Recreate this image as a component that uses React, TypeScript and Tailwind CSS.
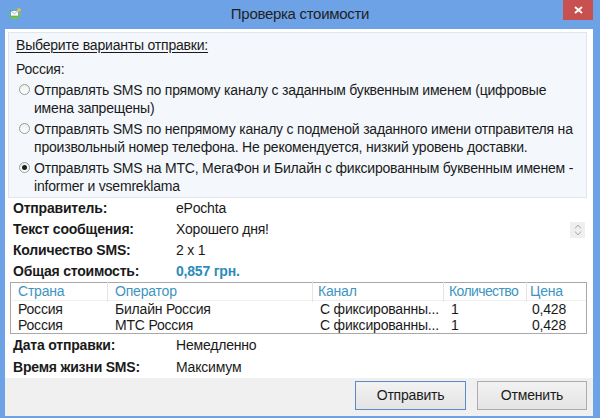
import React from 'react';

const font = "font-['Liberation_Sans',Arial,sans-serif]";

const options = [
  {
    lines: ['Отправлять SMS по прямому каналу с заданным буквенным именем (цифровые', 'имена запрещены)'],
    checked: false,
  },
  {
    lines: [
      'Отправлять SMS по непрямому каналу с подменой заданного имени отправителя на',
      'произвольный номер телефона. Не рекомендуется, низкий уровень доставки.',
    ],
    checked: false,
  },
  {
    lines: ['Отправлять SMS на МТС, МегаФон и Билайн с фиксированным буквенным именем -', 'informer и vsemreklama'],
    checked: true,
  },
];

const rows = [
  { country: 'Россия', operator: 'Билайн Россия', channel: 'С фиксированны...', count: '1', price: '0,428' },
  { country: 'Россия', operator: 'МТС Россия', channel: 'С фиксированны...', count: '1', price: '0,428' },
];

const AppIcon = () => (
  <svg width="15" height="14" viewBox="0 0 15 14">
    <circle cx="7.5" cy="7" r="6.5" fill="#5ab0d8" />
    <path d="M2 8 Q5 4 9 6 T14 5 L14 9 Q10 13 5 12 Z" fill="#7cc24a" />
    <rect x="3.5" y="3.5" width="8" height="5.5" fill="#fff" stroke="#5a7fa0" strokeWidth="0.6" />
    <path d="M3.5 3.5 L7.5 6.8 L11.5 3.5" fill="none" stroke="#5a7fa0" strokeWidth="0.6" />
    <circle cx="12" cy="3" r="1.8" fill="#f4c430" />
  </svg>
);

const Radio = ({ checked }: { checked: boolean }) => (
  <span className="mt-[3px] flex h-[11px] w-[11px] shrink-0 items-center justify-center rounded-full border border-[#9a9a9a] bg-gradient-to-b from-[#eeeeee] to-white">
    {checked && <span className="h-[5px] w-[5px] rounded-full bg-[#1e1e1e]" />}
  </span>
);

const InfoRow = ({ label, value, tall, children }: { label: string; value: React.ReactNode; tall?: boolean; children?: React.ReactNode }) => (
  <div className={`flex items-center pl-[8px] pr-[8px] ${tall ? 'h-[22px]' : 'h-[21px]'}`}>
    <span className="w-[163px] shrink-0 font-bold text-[#1a1a1a]">{label}</span>
    <span className="flex-1">{value}</span>
    {children}
  </div>
);

export default function App() {
  return (
    <div className={`flex h-[418px] w-[600px] flex-col bg-[#6ea2e6] text-[14px] tracking-[-0.2px] text-[#1a1a1a] ${font}`}>
      {/* title bar */}
      <div className="relative flex h-[29px] shrink-0 items-center justify-center">
        <div className="absolute left-[7px] top-[7px]">
          <AppIcon />
        </div>
        <span className="text-[15px] tracking-[-0.3px] text-[#1f1f1f]">Проверка стоимости</span>
        <button className="absolute right-[7px] top-0 flex h-[20px] w-[30px] items-center justify-center bg-[#c75050]">
          <svg width="9" height="8" viewBox="0 0 9 8">
            <path d="M1 1 L8 7 M8 1 L1 7" stroke="#fff" strokeWidth="1.8" />
          </svg>
        </button>
      </div>

      {/* client area */}
      <div className="ml-[5px] mr-[7px] flex flex-1 flex-col bg-white">
        <div className="ml-[3px] mr-[6px] mt-[3px] border border-[#dfe6ef] bg-[#f4f8fc] pb-[2px] pl-[7px] pr-[4px] pt-[3px]">
          <div className="h-[18px] leading-[18px] underline decoration-1 underline-offset-2">Выберите варианты отправки:</div>
          <div className="mt-[6px] h-[18px] leading-[18px]">Россия:</div>
          <div className="mt-[3px] flex flex-col gap-[3px]">
            {options.map((opt, i) => (
              <div key={i} className="flex gap-[4px] pl-[3px]">
                <Radio checked={opt.checked} />
                <div className="flex flex-col">
                  {opt.lines.map((l, j) => (
                    <span key={j} className="h-[18px] whitespace-nowrap leading-[18px]">
                      {l}
                    </span>
                  ))}
                </div>
              </div>
            ))}
          </div>
        </div>

        <InfoRow label="Отправитель:" value="ePochta" />
        <InfoRow label="Текст сообщения:" value="Хорошего дня!">
          <span className="flex h-[16px] w-[15px] flex-col items-center justify-center gap-[2px] bg-[#efefef]">
            <svg width="8" height="5" viewBox="0 0 8 5">
              <path d="M1 4.5 L4 1 L7 4.5" fill="none" stroke="#a8a8a8" strokeWidth="1" />
            </svg>
            <svg width="8" height="5" viewBox="0 0 8 5">
              <path d="M1 0.5 L4 4 L7 0.5" fill="none" stroke="#a8a8a8" strokeWidth="1" />
            </svg>
          </span>
        </InfoRow>
        <InfoRow label="Количество SMS:" value="2 x 1" />
        <InfoRow label="Общая стоимость:" value={<span className="font-bold text-[#2b8cbb]">0,857 грн.</span>} />

        {/* operators table */}
        <div className="ml-[5px] mr-[6px] border border-[#a9a9a9] bg-white">
          <div className="flex h-[18px] items-center border-b border-[#f0f0f0] text-[#3d95c2]">
            <span className="w-[97px] border-r border-[#e5e5e5] pl-[7px]">Страна</span>
            <span className="w-[205px] border-r border-[#e5e5e5] pl-[7px]">Оператор</span>
            <span className="w-[131px] border-r border-[#e5e5e5] pl-[5px]">Канал</span>
            <span className="w-[83px] border-r border-[#e5e5e5] pl-[5px] tracking-[-0.6px]">Количество</span>
            <span className="flex-1 pl-[3px]">Цена</span>
          </div>
          {rows.map((r, i) => (
            <div key={i} className="flex h-[16px] items-center">
              <span className="w-[97px] pl-[7px]">{r.country}</span>
              <span className="w-[205px] pl-[7px]">{r.operator}</span>
              <span className="w-[131px] pl-[7px]">{r.channel}</span>
              <span className="w-[83px] pl-[7px]">{r.count}</span>
              <span className="flex-1 pl-[5px]">{r.price}</span>
            </div>
          ))}
        </div>

        <InfoRow label="Дата отправки:" value="Немедленно" tall />
        <InfoRow label="Время жизни SMS:" value="Максимум" tall />

        {/* footer */}
        <div className="flex flex-1 items-start justify-end gap-[11px] bg-[#f0f0f0] pr-[6px] pt-[3px]">
          <button className="h-[29px] w-[111px] border border-[#5a8cc4] bg-gradient-to-b from-[#f2f2f2] to-[#e4e4e4] text-[#1a1a1a]">
            Отправить
          </button>
          <button className="h-[29px] w-[110px] border border-[#acacac] bg-gradient-to-b from-[#f2f2f2] to-[#e4e4e4] text-[#1a1a1a]">
            Отменить
          </button>
        </div>
      </div>
      <div className="h-[2px] shrink-0" />
    </div>
  );
}
